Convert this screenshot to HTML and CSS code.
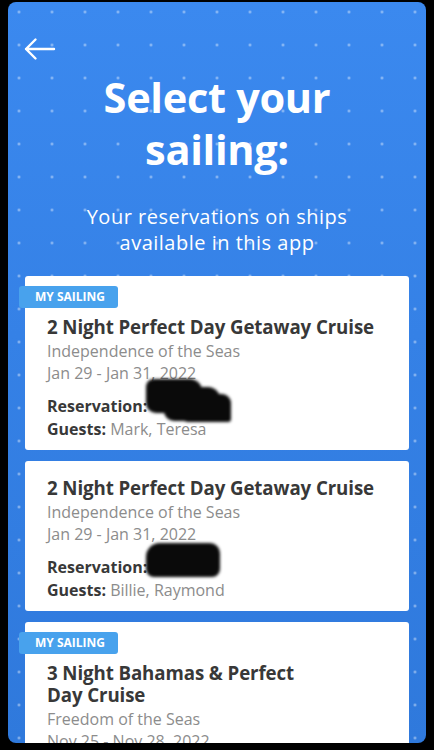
FILE: index.html
```html
<!DOCTYPE html>
<html lang="en">
<head>
<meta charset="utf-8">
<title>Select your sailing</title>
<link rel="stylesheet" href="styles.css">
</head>
<body>
<div class="screen">
  <header class="top">
    <button class="back" aria-label="Back">
      <svg width="34" height="24" viewBox="0 0 34 24" fill="none" stroke="#fff" stroke-width="2.4" stroke-linecap="round" stroke-linejoin="round"><path d="M3 12H31M12.5 2.5L3 12L12.5 21.5"/></svg>
    </button>
    <h1 class="title">Select your<br>sailing:</h1>
    <p class="subtitle">Your reservations on ships<br>available in this app</p>
  </header>
  <main class="list">
    <article class="card card-badged">
      <span class="badge">MY SAILING</span>
      <h2 class="cruise">2 Night Perfect Day Getaway Cruise</h2>
      <p class="meta">Independence of the Seas</p>
      <p class="meta">Jan 29 - Jan 31, 2022</p>
      <p class="row row-res"><b>Reservation:</b><span class="redact redact-a"></span></p>
      <p class="row"><b>Guests:</b> <span class="muted">Mark, Teresa</span></p>
    </article>
    <article class="card">
      <h2 class="cruise">2 Night Perfect Day Getaway Cruise</h2>
      <p class="meta">Independence of the Seas</p>
      <p class="meta">Jan 29 - Jan 31, 2022</p>
      <p class="row row-res"><b>Reservation:</b><span class="redact redact-b"></span></p>
      <p class="row"><b>Guests:</b> <span class="muted">Billie, Raymond</span></p>
    </article>
    <article class="card card-badged">
      <span class="badge">MY SAILING</span>
      <h2 class="cruise">3 Night Bahamas &amp; Perfect<br>Day Cruise</h2>
      <p class="meta">Freedom of the Seas</p>
      <p class="meta">Nov 25 - Nov 28, 2022</p>
      <p class="row row-res"><b>Reservation:</b></p>
      <p class="row"><b>Guests:</b> <span class="muted">Mark, Teresa</span></p>
    </article>
  </main>
</div>
</body>
</html>
```
FILE: styles.css
```css
html, body {
  margin: 0;
  padding: 0;
  background: #000;
  height: 750px;
  overflow: hidden;
}
body {
  font-family: "Open Sans", "Lato", sans-serif;
}
.screen {
  margin: 2px 8px 0 8px;
  height: 741px;
  border-radius: 8px;
  overflow: hidden;
  background-color: #3683e8;
  background-image:
    radial-gradient(circle, rgba(255,255,255,0.5) 0.9px, rgba(255,255,255,0) 1.6px),
    linear-gradient(180deg, #3b89ef 0%, #3581e6 45%, #2f79dc 100%);
  background-size: 33px 33px, 100% 100%;
  background-position: -5.5px -6.5px, 0 0;
  display: flex;
  flex-direction: column;
}
.top {
  display: flex;
  flex-direction: column;
  align-items: center;
  padding: 35px 0 0;
}
.back {
  align-self: flex-start;
  margin-left: 15px;
  width: 34px;
  height: 24px;
  padding: 0;
  border: 0;
  background: none;
  display: block;
}
.back svg { display: block; }
.title {
  margin: 10px 0 0;
  color: #fff;
  font-weight: 700;
  font-size: 41.5px;
  line-height: 52px;
  text-align: center;
  letter-spacing: -0.3px;
}
.subtitle {
  margin: 29px 0 0;
  color: #fff;
  font-size: 20px;
  line-height: 26px;
  text-align: center;
  letter-spacing: 0.5px;
}
.list {
  display: flex;
  flex-direction: column;
  gap: 11px;
  padding: 20px 17px 0;
}
.card {
  position: relative;
  background: #fff;
  border-radius: 3px;
  padding: 16px 22px 9px;
  display: flex;
  flex-direction: column;
  align-items: flex-start;
}
.card-badged {
  padding-top: 10px;
}
.badge {
  margin: 0 0 8px -28px;
  height: 22px;
  padding: 0 13px 0 16px;
  border-radius: 3px;
  background: #48a2ed;
  color: #fff;
  font-weight: 700;
  font-size: 12px;
  line-height: 22px;
}
.cruise {
  margin: 0 0 2px;
  color: #383838;
  font-weight: 700;
  font-size: 18.7px;
  line-height: 22px;
  letter-spacing: -0.1px;
}
.meta {
  margin: 0;
  color: #8c8c8c;
  font-size: 16px;
  line-height: 22px;
}
.row {
  position: relative;
  margin: 0;
  color: #383838;
  font-size: 16px;
  line-height: 23px;
}
.row b { font-weight: 700; }
.row-res { margin-top: 11px; }
.muted { color: #8c8c8c; }
.redact {
  position: absolute;
  background: #0a0a0a;
  filter: blur(1.5px);
}
.redact-a {
  left: 99px;
  top: -16px;
  width: 56px;
  height: 34px;
  border-radius: 8px 12px 6px 10px;
  box-shadow: 32px 12px 0 -3px #0a0a0a, 18px 8px 0 0 #0a0a0a;
}
.redact-b {
  left: 99px;
  top: -13px;
  width: 74px;
  height: 34px;
  border-radius: 14px 10px 8px 8px;
}
```
